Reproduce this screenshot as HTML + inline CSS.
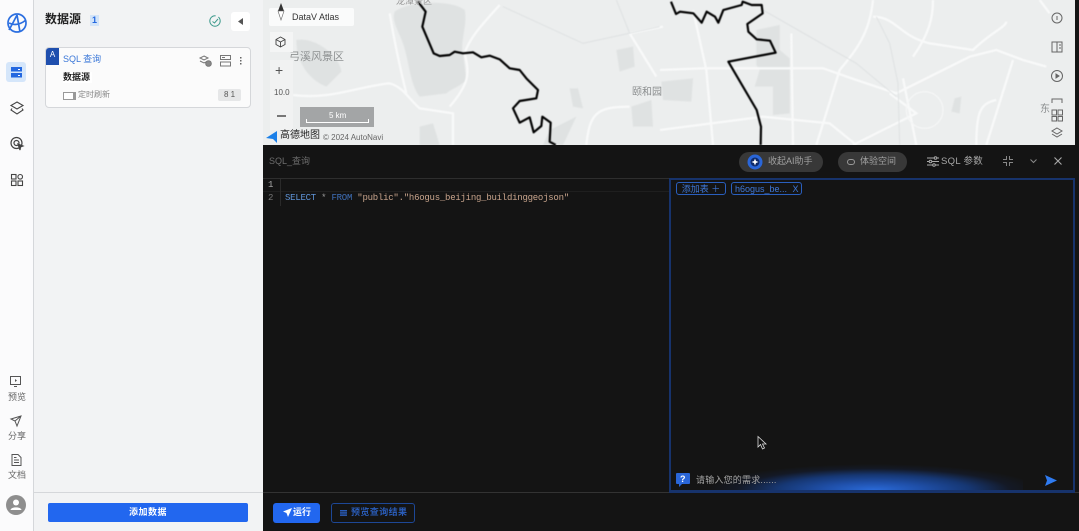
<!DOCTYPE html>
<html lang="zh">
<head>
<meta charset="utf-8">
<style>
html,body{margin:0;padding:0;width:1079px;height:531px;overflow:hidden;background:#fff}
body{position:relative;font-family:"Liberation Sans","Noto Sans CJK SC",sans-serif}
#w{position:absolute;left:0;top:0;width:1079px;height:531px;overflow:hidden;filter:blur(.35px)}
.a{position:absolute}
.t{position:absolute;white-space:nowrap;line-height:1}
svg{position:absolute;overflow:visible}
</style>
</head>
<body>
<div id="w">
<!-- left rail -->
<div class="a" style="left:0;top:0;width:33px;height:531px;background:#fbfbfc;border-right:1px solid #d5d7da"></div>
<svg style="left:6px;top:12px" width="22" height="22" viewBox="0 0 22 22" fill="none" stroke="#2c6fe0" stroke-width="1.7"><circle cx="11" cy="11" r="9"/><path d="M3 18 C7 11 9 7 11 3 M11 3 L14 20 M3 11 C9 14 15 12 20 8"/></svg>
<div class="a" style="left:6px;top:62px;width:20px;height:20px;background:#d5e6fa;border-radius:3px"></div>
<svg style="left:11px;top:67px" width="11" height="11" viewBox="0 0 11 11"><rect x="0" y="0" width="11" height="4.5" fill="#2468e0"/><rect x="0" y="6" width="11" height="4.5" fill="#2468e0"/><rect x="7" y="2" width="2" height="1" fill="#fff"/><rect x="7" y="8" width="2" height="1" fill="#fff"/></svg>
<svg style="left:10px;top:101px" width="14" height="14" viewBox="0 0 14 14" fill="none" stroke="#444" stroke-width="1.1"><path d="M7 1 L13 4.5 L7 8 L1 4.5Z M2 7.5 L1 9 L7 13 L13 9 L12 7.5"/></svg>
<svg style="left:10px;top:136px" width="14" height="15" viewBox="0 0 14 15" fill="none" stroke="#444" stroke-width="1.2"><circle cx="6.5" cy="7" r="5.5"/><circle cx="6.5" cy="7" r="2.5"/><path d="M8 8 L13 10 L10.5 11 L10 14Z" fill="#444"/></svg>
<svg style="left:11px;top:174px" width="12" height="12" viewBox="0 0 12 12" fill="none" stroke="#444" stroke-width="1.1"><rect x=".5" y=".5" width="4.5" height="4.5"/><circle cx="9.2" cy="2.8" r="2.3"/><rect x=".5" y="7" width="4.5" height="4.5"/><rect x="7" y="7" width="4.5" height="4.5"/></svg>
<svg style="left:10px;top:376px" width="12" height="11" viewBox="0 0 12 11" fill="none" stroke="#555"><rect x=".5" y=".5" width="10" height="8"/><path d="M4 10.5H7" /><path d="M5 3 L7 4.5 L5 6Z" fill="#555" stroke="none"/></svg>
<div class="t" style="left:8px;top:393px;font-size:9px;color:#666">预览</div>
<svg style="left:10px;top:415px" width="12" height="12" viewBox="0 0 12 12" fill="none" stroke="#555"><path d="M11 1 L1 4 L5 6 L7 11Z M5 6 L11 1"/></svg>
<div class="t" style="left:8px;top:432px;font-size:9px;color:#666">分享</div>
<svg style="left:11px;top:454px" width="11" height="12" viewBox="0 0 11 12" fill="none" stroke="#555"><path d="M1 .5H7L10 3.5V11.5H1Z M3 6H8 M3 8.5H8 M3 3.5H5.5"/></svg>
<div class="t" style="left:8px;top:471px;font-size:9px;color:#666">文档</div>
<svg style="left:6px;top:495px" width="20" height="20" viewBox="0 0 20 20"><circle cx="10" cy="10" r="10" fill="#8e8e8e"/><circle cx="10" cy="7.5" r="3" fill="#fff"/><path d="M4.5 15 C5 11.5 15 11.5 15.5 15Z" fill="#fff"/></svg>

<!-- data panel -->
<div class="a" style="left:34px;top:0;width:229px;height:531px;background:#f2f3f4"></div>
<div class="t" style="left:45px;top:13px;font-size:12px;font-weight:bold;color:#222">数据源</div>
<div class="a" style="left:90px;top:15px;width:9px;height:11px;background:#d3e4f8;color:#2468e0;font-size:9px;line-height:11px;text-align:center;font-weight:bold">1</div>
<svg style="left:209px;top:15px" width="12" height="12" viewBox="0 0 12 12" fill="none" stroke="#3d9a8c" stroke-width="1"><circle cx="6" cy="6" r="5.2" stroke-dasharray="25 3"/><path d="M3.5 6.5L5.5 8L9 4" stroke="#3d9a8c"/></svg>
<div class="a" style="left:231px;top:12px;width:19px;height:19px;background:#fff;border-radius:3px"></div>
<svg style="left:238px;top:18px" width="5" height="7" viewBox="0 0 5 7"><path d="M5 0V7L0 3.5Z" fill="#555"/></svg>

<div class="a" style="left:45px;top:47px;width:204px;height:59px;background:#fbfbfb;border:1px solid #d5d7da;border-radius:4px"></div>
<div class="a" style="left:46px;top:48px;width:13px;height:17px;background:#1f4fae;color:#fff;font-size:8px;line-height:14px;text-align:center;border-radius:3px 0 0 0">A</div>
<div class="t" style="left:63px;top:55px;font-size:9px;color:#3a77d8">SQL 查询</div>
<svg style="left:199px;top:55px" width="13" height="12" viewBox="0 0 13 12" fill="none" stroke="#777"><path d="M5 1L9 3L5 5L1 3Z M1 6L5 8L7 7"/><circle cx="9.5" cy="8.5" r="2.8" fill="#888"/></svg>
<svg style="left:220px;top:55px" width="11" height="12" viewBox="0 0 11 12" fill="none" stroke="#777"><rect x=".5" y=".5" width="10" height="4"/><rect x=".5" y="7" width="10" height="4"/><path d="M2 2.5H5" /></svg>
<svg style="left:240px;top:57px" width="2" height="8" viewBox="0 0 2 8" fill="#666"><rect width="1.5" height="1.5"/><rect y="3" width="1.5" height="1.5"/><rect y="6" width="1.5" height="1.5"/></svg>
<div class="t" style="left:63px;top:72px;font-size:9px;font-weight:bold;color:#222;background:#fff;padding:1px 2px 1px 0">数据源</div>
<div class="a" style="left:63px;top:92px;width:9px;height:6px;border:1px solid #999;border-right-width:3px;background:#fff"></div>
<div class="t" style="left:78px;top:91px;font-size:8px;color:#888">定时刷新</div>
<div class="a" style="left:218px;top:89px;width:23px;height:12px;background:#e6e7e8;border-radius:2px;color:#555;font-size:8px;line-height:12px;text-align:center">8 1</div>

<div class="a" style="left:34px;top:492px;width:229px;height:1px;background:#d5d7da"></div>
<div class="a" style="left:48px;top:503px;width:200px;height:19px;background:#2267ef;border-radius:2px;color:#fff;font-size:9px;line-height:19px;text-align:center;font-weight:bold;letter-spacing:.5px">添加数据</div>

<!-- map -->
<div class="a" style="left:263px;top:0;width:812px;height:145px;background:#eceeee;overflow:hidden">
<svg style="left:0;top:0;filter:blur(.4px)" width="816" height="145" viewBox="0 0 2448 435" fill="none">
 <g fill="#dfe2e2">
  <path d="M395 35 C440 0 570 0 605 30 C615 70 590 130 600 160 L610 240 C590 260 560 270 550 280 L470 290 C440 250 440 190 420 130 C405 90 385 60 395 35Z"/>
  <path d="M100 120 C160 110 230 170 235 215 L190 260 C140 240 100 190 100 120Z"/>
  <path d="M1060 150 L1110 140 L1115 200 L1070 215Z"/>
  <path d="M920 265 L945 265 L960 325 L930 320Z"/>
  <path d="M1105 320 L1165 300 L1170 380 L1110 380Z"/>
  <path d="M860 390 L920 360 L940 350 L900 435 L840 435Z"/>
  <path d="M470 380 L510 370 L530 435 L470 435Z"/>
  <path d="M1480 90 L1550 75 L1550 150 L1580 175 L1580 340 L1530 345 L1530 260 L1475 260 L1490 210 L1480 195Z"/>
  <path d="M1195 245 L1290 235 L1285 305 L1200 300Z"/>
  <path d="M2075 295 L2095 290 L2090 340 L2065 335Z"/>
 </g>
 <g stroke="#f8f9f9" stroke-width="7">
  <path d="M90 285 C200 300 280 260 380 250 C420 260 440 300 470 325 L570 340 L570 435"/>
  <path d="M710 15 C670 60 620 110 605 160 C620 220 620 250 560 320"/>
  <path d="M380 40 C390 100 410 200 430 280"/>
  <path d="M1100 320 C1000 320 980 340 970 435"/>
  <path d="M1100 100 L1200 80 M1100 100 L1180 230"/>
  <path d="M1191 210 L1320 205 L1680 205 L1780 240 L1900 280 L2000 230 L2120 170 L2200 150 L2280 180 L2350 200"/>
  <path d="M1830 0 C1820 100 1780 150 1730 210 L1660 435"/>
  <path d="M1830 50 C1900 50 1910 110 2000 130 L2130 150 C2180 100 2230 80 2230 65"/>
  <path d="M2330 0 L2360 40 M2250 180 L2170 435"/>
  <path d="M1191 390 L1500 350 L1700 370 L1780 435"/>
  <path d="M1290 30 L1330 210 L1350 435 M1585 100 L1590 435"/>
  <path d="M2200 300 C2150 310 2140 340 2140 435"/>
  <path d="M1880 280 L1960 340 L1770 435"/>
  <path d="M2010 0 C2010 50 2000 100 1950 170 M1920 235 L1960 435"/>
 </g>
 <g stroke="#dcdfe0" stroke-width="2.5">
  <path d="M1840 50 L1880 130 L1905 250 L1910 435"/>
  <path d="M720 20 L960 130 L1190 80 M1060 0 L1100 100"/>
  <path d="M1500 30 L1780 190 L1900 290"/>
  <circle cx="1985" cy="330" r="55" stroke="#f5f6f6" stroke-width="4"/>
 </g>
 <g stroke="#000" stroke-width="6.5" stroke-linejoin="round">
  <path d="M465 5 L488 35 L478 80 L512 160 L530 168 L560 165 L575 155 L600 160 L630 157 L655 172 L680 167 L710 178 L740 205 L770 210 L790 235 L825 270 L820 295 L770 303 L750 325 L770 368 L800 352 L812 397 L835 378 L838 350 L863 368 L860 425 L878 435"/>
  <g transform="translate(1191,0)"><path d="M33 5 L48 42 L60 35 L100 40 L125 68 L140 35 L165 50 L175 68 L190 30 L245 15 L248 5 L275 15 L305 15 L308 40 L262 72 L265 95 L290 118 L330 122 L347 158 L205 185 L290 330 L303 380 L302 435"/></g>
 </g>
</svg>
<div class="t" style="left:133px;top:1px;font-size:9px;color:#999;transform:translateY(-4px)">龙潭景区</div>
<div class="t" style="left:26px;top:52px;font-size:11px;color:#8e9192">弓溪风景区</div>
<div class="t" style="left:369px;top:88px;font-size:10px;color:#8a8d8e">颐和园</div>
<div class="t" style="left:777px;top:105px;font-size:10px;color:#8a8d8e">东</div>
<div class="a" style="left:6px;top:8px;width:85px;height:18px;background:#fafbfb;border-radius:2px"></div>
<div class="t" style="left:29px;top:13px;font-size:9px;color:#333">DataV Atlas</div>
<svg style="left:14px;top:3px" width="8" height="17" viewBox="0 0 8 17"><path d="M4 0L7 8H1Z" fill="#333"/><path d="M4 17L7 8H1Z" fill="#fff" stroke="#666" stroke-width=".6"/></svg>
<div class="a" style="left:7px;top:32px;width:23px;height:20px;background:#f4f5f5"></div>
<svg style="left:12px;top:36px" width="11" height="12" viewBox="0 0 11 12" fill="none" stroke="#444" stroke-width=".9"><path d="M5.5 1L10 3.5V8.5L5.5 11L1 8.5V3.5Z M1 3.5L5.5 6L10 3.5 M5.5 6V11"/></svg>
<div class="a" style="left:7px;top:60px;width:23px;height:70px;background:#f1f2f2"></div>
<div class="t" style="left:12px;top:63px;font-size:14px;color:#555">+</div>
<div class="t" style="left:11px;top:89px;font-size:8px;color:#555">10.0</div>
<div class="a" style="left:14px;top:115px;width:9px;height:2px;background:#777"></div>
<div class="a" style="left:37px;top:107px;width:74px;height:20px;background:#a3a5a6"></div>
<div class="t" style="left:66px;top:112px;font-size:8px;color:#fff">5 km</div>
<div class="a" style="left:43px;top:119px;width:61px;height:3px;border:1px solid #fff;border-top:0"></div>
<svg style="left:3px;top:131px" width="11" height="12" viewBox="0 0 11 12"><path d="M11 0V12L7 8L0 7Z" fill="#1a7fe8"/></svg>
<div class="t" style="left:17px;top:131px;font-size:10px;color:#222">高德地图</div>
<div class="t" style="left:60px;top:134px;font-size:8px;color:#666">© 2024 AutoNavi</div>
<!-- right map icons -->
<svg style="left:0;top:0" width="812" height="145" fill="none" stroke="#666" stroke-width="1">
 <circle cx="794" cy="18" r="5"/><path d="M794 16V20"/>
 <rect x="789" y="42" width="10" height="10"/><path d="M794 42V52M796 45H798M796 48H798"/>
 <circle cx="794" cy="76" r="5.5"/><path d="M793 74L796 76L793 78Z" fill="#666"/>
 <path d="M789 103V99H799V103"/>
 <rect x="789" y="110" width="4.5" height="5"/><rect x="795" y="110" width="4.5" height="5"/><rect x="789" y="116.5" width="4.5" height="4.5"/><rect x="795" y="116.5" width="4.5" height="4.5"/>
 <path d="M794 128L799 131L794 134L789 131Z M789 134L794 137L799 134"/>
</svg>
</div>
<div class="a" style="left:1075px;top:0;width:4px;height:145px;background:#141414"></div>

<!-- dark panel -->
<div class="a" style="left:263px;top:145px;width:816px;height:386px;background:#141414"></div>
<div class="t" style="left:269px;top:157px;font-size:9px;color:#6d6d6d">SQL_查询</div>

<div class="a" style="left:739px;top:152px;width:84px;height:20px;background:#383838;border-radius:10px"></div>
<svg style="left:747px;top:154px" width="16" height="16" viewBox="0 0 16 16"><circle cx="8" cy="8" r="7.5" fill="#2a66d8"/><circle cx="8" cy="8" r="4.5" fill="#0e2a6a"/><path d="M8 4.5L9 7L11.5 8L9 9L8 11.5L7 9L4.5 8L7 7Z" fill="#fff"/></svg>
<div class="t" style="left:768px;top:157px;font-size:9px;color:#a0a0a0">收起AI助手</div>
<div class="a" style="left:838px;top:152px;width:69px;height:20px;background:#383838;border-radius:10px"></div>
<svg style="left:847px;top:159px" width="8" height="6" viewBox="0 0 8 6" fill="none" stroke="#999"><rect x=".5" y=".5" width="7" height="5" rx="2.5"/></svg>
<div class="t" style="left:860px;top:157px;font-size:9px;color:#a0a0a0">体验空间</div>
<svg style="left:927px;top:156px" width="12" height="11" viewBox="0 0 12 11" fill="none" stroke="#aaa"><path d="M0 2H12M0 5.5H12M0 9H12"/><circle cx="8.5" cy="2" r="1.3" fill="#141414"/><circle cx="3.5" cy="5.5" r="1.3" fill="#141414"/><circle cx="7" cy="9" r="1.3" fill="#141414"/></svg>
<div class="t" style="left:941px;top:157px;font-size:9.5px;color:#a8a8a8;letter-spacing:.3px">SQL 参数</div>
<svg style="left:1003px;top:156px" width="10" height="10" viewBox="0 0 10 10" fill="none" stroke="#888"><path d="M0 3.5H3.5V0M6.5 0V3.5H10M0 6.5H3.5V10M6.5 10V6.5H10"/></svg>
<svg style="left:1030px;top:159px" width="7" height="5" viewBox="0 0 7 5" fill="none" stroke="#888"><path d="M.5 .5L3.5 3.5L6.5 .5"/></svg>
<svg style="left:1054px;top:157px" width="8" height="8" viewBox="0 0 8 8" fill="none" stroke="#aaa" stroke-width="1.1"><path d="M.5 .5L7.5 7.5M7.5 .5L.5 7.5"/></svg>

<div class="a" style="left:263px;top:178px;width:407px;height:1px;background:#2e2e2e"></div>
<div class="a" style="left:263px;top:191px;width:407px;height:1px;background:#1f1f1f"></div>
<div class="a" style="left:280px;top:179px;width:1px;height:27px;background:#2a2a2a"></div>
<div class="t" style="left:268px;top:181px;font:9px/1 'Liberation Mono',monospace;color:#aaa">1</div>
<div class="t" style="left:268px;top:194px;font:9px/1 'Liberation Mono',monospace;color:#777">2</div>
<div class="t" style="left:285px;top:194px;font:9px/1 'Liberation Mono',monospace;letter-spacing:-.24px;color:#c9a58d"><span style="color:#5f93d6">SELECT</span> <span style="color:#999">*</span> <span style="color:#3f6fb8">FROM</span> "public"."h6ogus_beijing_buildinggeojson"</div>

<!-- AI panel -->
<div class="a" style="left:669px;top:178px;width:406px;height:314px;box-sizing:border-box;border:2px solid #17336c;overflow:hidden">
 <div class="a" style="left:20px;right:50px;bottom:0;height:26px;background:radial-gradient(ellipse 50% 100% at 55% 100%,#2a6ad8 0%,#1f4fa8 30%,#163773 58%,rgba(20,30,55,.5) 82%,rgba(20,20,20,0) 100%)"></div>
</div>
<div class="a" style="left:676px;top:182px;width:50px;height:13px;box-sizing:border-box;border:1px solid #2a5fbe;border-radius:3px;color:#3f78d8;font-size:9px;line-height:12px;text-align:center;white-space:nowrap">添加表 ＋</div>
<div class="a" style="left:731px;top:182px;width:71px;height:13px;box-sizing:border-box;border:1px solid #2a5fbe;border-radius:3px;color:#3f78d8;font-size:9px;line-height:12px;padding-left:3px;white-space:nowrap">h6ogus_be... <span style="margin-left:3px">X</span></div>

<svg style="left:757px;top:436px" width="11" height="15" viewBox="0 0 11 15"><path d="M1 .5V11L3.5 8.5L5.5 13L7.5 12L5.5 8H9Z" fill="#111" stroke="#ddd" stroke-width=".8"/></svg>

<svg style="left:676px;top:473px" width="14" height="15" viewBox="0 0 14 15"><path d="M1 0H13Q14 0 14 1V10Q14 11 13 11H6L3 14V11H1Q0 11 0 10V1Q0 0 1 0Z" fill="#2a66d8"/></svg>
<div class="t" style="left:680px;top:475px;font-size:9px;color:#fff;font-weight:bold">?</div>
<div class="t" style="left:696px;top:476px;font-size:9px;color:#a5a5a5;letter-spacing:.2px">请输入您的需求......</div>
<svg style="left:1045px;top:475px" width="12" height="11" viewBox="0 0 12 11"><path d="M0 0L12 5.5L0 11L2 5.5Z" fill="#2f7bf0"/></svg>

<div class="a" style="left:263px;top:492px;width:816px;height:1px;background:#333"></div>
<div class="a" style="left:669px;top:491px;width:406px;height:2px;background:#17336c"></div>
<div class="a" style="left:273px;top:503px;width:47px;height:20px;background:#2267ef;border-radius:3px"></div>
<svg style="left:283px;top:508px" width="9" height="9" viewBox="0 0 9 9"><path d="M9 0L0 3.5L3.5 5L5 9Z" fill="#fff"/></svg>
<div class="t" style="left:293px;top:508px;font-size:9px;color:#fff;font-weight:bold">运行</div>
<div class="a" style="left:331px;top:503px;width:84px;height:20px;box-sizing:border-box;border:1px solid #1d4796;border-radius:3px"></div>
<svg style="left:340px;top:510px" width="7" height="6" viewBox="0 0 7 6" fill="#2a5cb8"><rect width="7" height="1.5"/><rect y="2.2" width="7" height="1.5"/><rect y="4.4" width="7" height="1.5"/></svg>
<div class="t" style="left:351px;top:508px;font-size:9px;color:#2a5cb8;font-weight:bold;letter-spacing:.4px">预览查询结果</div>
</div>
</body>
</html>
